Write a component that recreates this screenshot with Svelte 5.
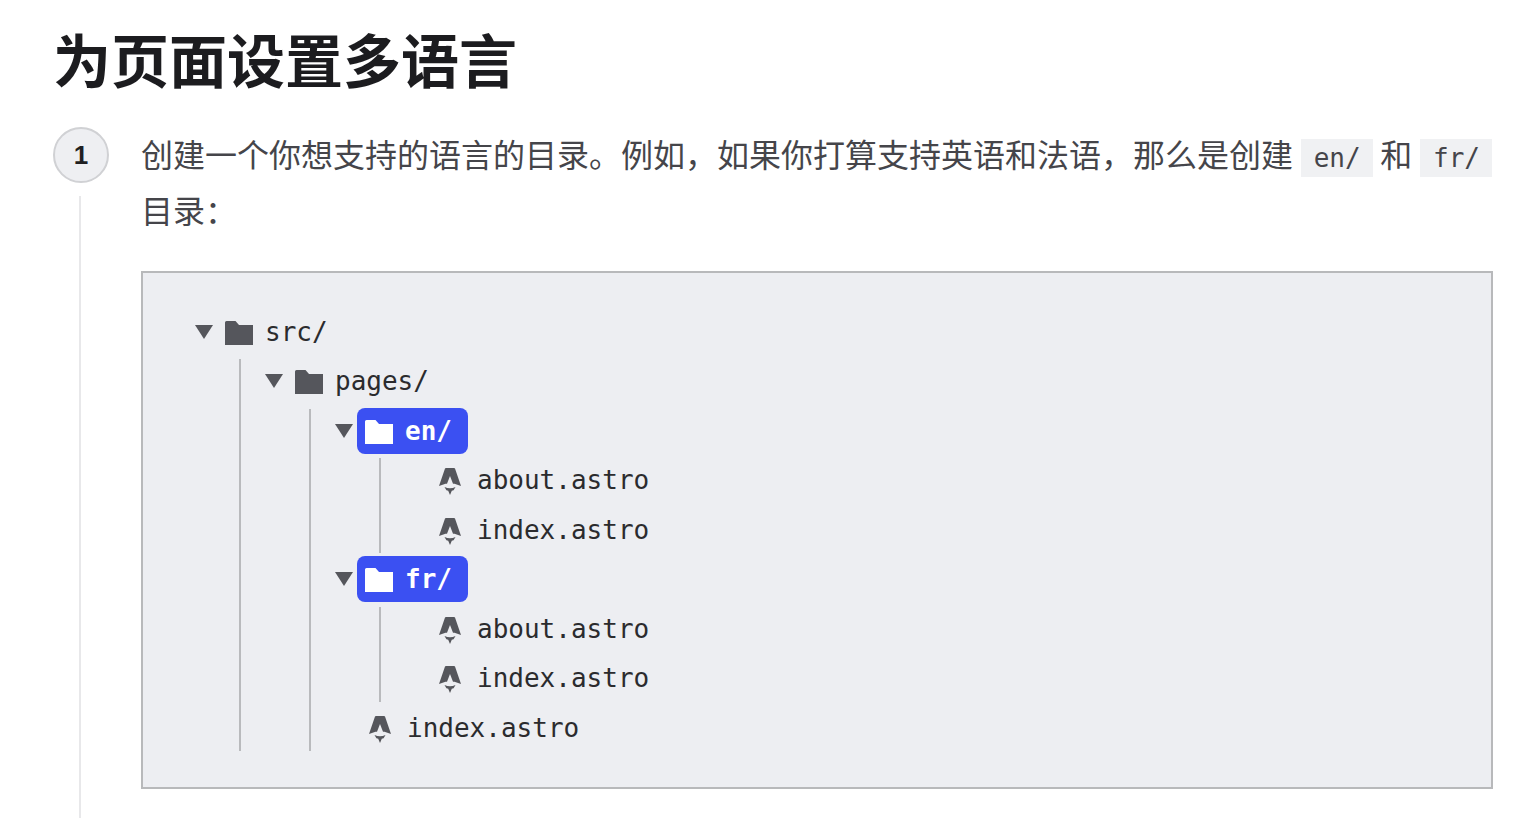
<script>
  const astro = (name) => ({ name, type: "file" });
  const dir = (name, children, active = false) => ({ name, type: "dir", children, active });
  const localeFiles = () => [astro("about.astro"), astro("index.astro")];

  const tree = [
    dir("src/", [
      dir("pages/", [
        dir("en/", localeFiles(), true),
        dir("fr/", localeFiles(), true),
        astro("index.astro"),
      ]),
    ]),
  ];
</script>

{#snippet nodes(items)}
  <ul class="nodes">
    {#each items as item}
      <li>
        {#if item.type === "dir"}
          <div class="row">
            <svg class="caret" viewBox="0 0 18 14"><path d="M0 0H18L9 14Z" /></svg>
            <span class="label" class:active={item.active}>
              <svg class="folder" viewBox="0 0 28 24"><path d="M0 1.5Q0 0 1.5 0H10.5L14 4H28V24H0Z" /></svg>
              <span>{item.name}</span>
            </span>
          </div>
          <div class="children">
            {@render nodes(item.children)}
          </div>
        {:else}
          <div class="row file">
            <svg class="astro" viewBox="0 0 22 27">
              <path d="M6 .5Q6.2 0 7 0H15Q15.8 0 16 .5L22 18L15.5 15.8L14 15.8L11 8L8 15.8L6.5 15.8L0 18Z" />
              <path d="M5.5 19Q11 21.4 16.5 19L14.6 22.2L12.8 22.8L11 27L9.2 22.8L7.4 22.2Z" />
            </svg>
            <span>{item.name}</span>
          </div>
        {/if}
      </li>
    {/each}
  </ul>
{/snippet}

<main>
  <h1>为页面设置多语言</h1>
  <section class="step">
    <div class="marker">
      <div class="num">1</div>
      <div class="rail"></div>
    </div>
    <div class="body">
      <p>创建一个你想支持的语言的目录。例如，如果你打算支持英语和法语，那么是创建 <code>en/</code> 和 <code>fr/</code> 目录：</p>
      <div class="filetree">
        {@render nodes(tree)}
      </div>
    </div>
  </section>
</main>

<style>
  :global(body) {
    background: #fff;
    overflow: hidden;
  }
  main {
    padding: 14px 47px 12px 53px;
    font-family: "Noto Sans CJK SC", "Noto Sans", sans-serif;
    color: #45454a;
  }
  h1 {
    margin: 0 0 25px;
    font-size: 58px;
    line-height: 88px;
    font-weight: 700;
    color: #1c1c1f;
  }
  .step {
    display: grid;
    grid-template-columns: 88px 1fr;
  }
  .marker {
    display: flex;
    flex-direction: column;
  }
  .num {
    width: 52px;
    height: 52px;
    border: 2px solid #d0d1d4;
    border-radius: 50%;
    background: #eeeff2;
    color: #1f1f22;
    display: flex;
    align-items: center;
    justify-content: center;
    font: 700 26px "Liberation Sans", sans-serif;
  }
  .rail {
    flex: 1;
    width: 2px;
    margin: 13px 0 0 26px;
    background: #e8e8ea;
  }
  p {
    margin: -2px 0 0;
    font-size: 32px;
    line-height: 56px;
  }
  code {
    display: inline-block;
    margin-left: 1px;
    padding: 0 12.5px;
    height: 38px;
    vertical-align: 0;
    background: #f0f1f3;
    font: 26px/38px "DejaVu Sans Mono", monospace;
  }
  .filetree {
    margin: 34px 0 29px;
    padding: 34px 0 34px 52px;
    border: 2px solid #b8b9bb;
    background: #edeef2;
    font: 26px "DejaVu Sans Mono", monospace;
    color: #2b2b2e;
  }
  .nodes {
    list-style: none;
    margin: 0;
    padding: 0;
  }
  .row {
    display: flex;
    align-items: center;
    height: 49.5px;
  }
  .caret {
    width: 18px;
    height: 14px;
    margin-right: 4px;
    fill: #55565c;
  }
  .label {
    display: flex;
    align-items: center;
    gap: 12px;
    height: 46px;
    padding: 0 16px 0 8px;
    border-radius: 8px;
  }
  .label.active {
    background: #3b50f2;
    color: #fff;
    font-weight: 700;
  }
  .folder {
    width: 28px;
    height: 24px;
    margin-top: 2px;
    fill: #55565c;
  }
  .active .folder {
    fill: #fff;
  }
  .children {
    position: relative;
    margin-left: 44px;
    padding-left: 26px;
  }
  .children::before {
    content: "";
    position: absolute;
    left: 0;
    top: 2.5px;
    bottom: 1.5px;
    width: 2px;
    background: #b9babd;
  }
  .file {
    padding-left: 34px;
    gap: 16px;
  }
  .astro {
    width: 22px;
    height: 27px;
    margin-top: 3px;
    fill: #55565c;
  }
</style>
